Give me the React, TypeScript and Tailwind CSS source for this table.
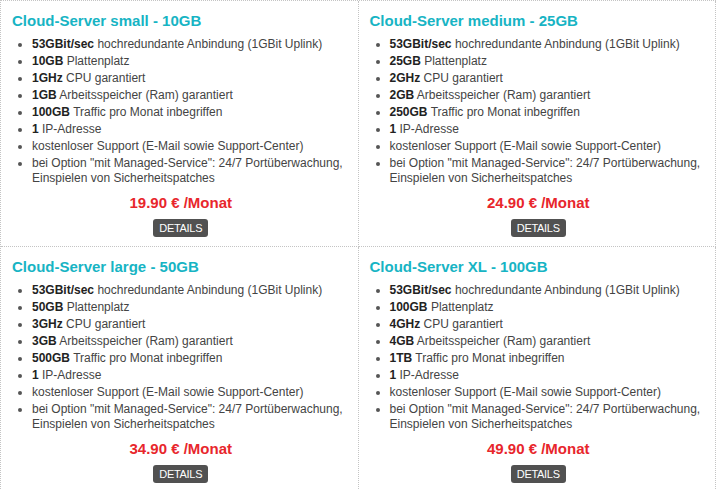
import React from 'react';

type Plan = {
  name: string;
  disk: string;
  cpu: string;
  ram: string;
  traffic: string;
  price: string;
};

const plans: Plan[] = [
  { name: 'Cloud-Server small - 10GB', disk: '10GB', cpu: '1GHz', ram: '1GB', traffic: '100GB', price: '19.90' },
  { name: 'Cloud-Server medium - 25GB', disk: '25GB', cpu: '2GHz', ram: '2GB', traffic: '250GB', price: '24.90' },
  { name: 'Cloud-Server large - 50GB', disk: '50GB', cpu: '3GHz', ram: '3GB', traffic: '500GB', price: '34.90' },
  { name: 'Cloud-Server XL - 100GB', disk: '100GB', cpu: '4GHz', ram: '4GB', traffic: '1TB', price: '49.90' },
];

function PlanCell({ plan }: { plan: Plan }) {
  const items: [string, string][] = [
    ['53GBit/sec', 'hochredundante Anbindung (1GBit Uplink)'],
    [plan.disk, 'Plattenplatz'],
    [plan.cpu, 'CPU garantiert'],
    [plan.ram, 'Arbeitsspeicher (Ram) garantiert'],
    [plan.traffic, 'Traffic pro Monat inbegriffen'],
    ['1', 'IP-Adresse'],
    ['', 'kostenloser Support (E-Mail sowie Support-Center)'],
    ['', 'bei Option "mit Managed-Service": 24/7 Portüberwachung, Einspielen von Sicherheitspatches'],
  ];

  return (
    <div className="border-r border-b border-dotted border-[#c4c4c4] pt-[10px] pb-[9px] pl-[11px] pr-[8px]">
      <h2 className="text-[15px] leading-[20px] font-bold text-[#17b4c4]">{plan.name}</h2>
      <ul className="mt-[6px] list-disc pl-[20px] text-[12px] leading-[15px] text-[#444] marker:text-[#555]">
        {items.map(([b, t], i) => (
          <li key={i} className="mb-[2px]">
            {b && <b className="font-bold text-[#222]">{b}</b>}
            {b ? ' ' : ''}
            {t}
          </li>
        ))}
      </ul>
      <div className="mt-[7px] text-center text-[15px] leading-[20px] font-bold text-[#e8262c]">
        {plan.price} € /Monat
      </div>
      <div className="mt-[6px] flex justify-center">
        <button className="h-[18px] px-[6px] rounded-[3px] bg-[#515151] text-white text-[11px] leading-[18px] tracking-[-0.3px]">
          DETAILS
        </button>
      </div>
    </div>
  );
}

export default function App() {
  return (
    <div className="bg-white min-h-screen" style={{ fontFamily: '"Liberation Sans", Arial, sans-serif' }}>
      <div className="w-[716px] grid grid-cols-2 border-t border-l border-dotted border-[#c4c4c4]">
        {plans.map((p) => (
          <PlanCell key={p.name} plan={p} />
        ))}
      </div>
    </div>
  );
}
